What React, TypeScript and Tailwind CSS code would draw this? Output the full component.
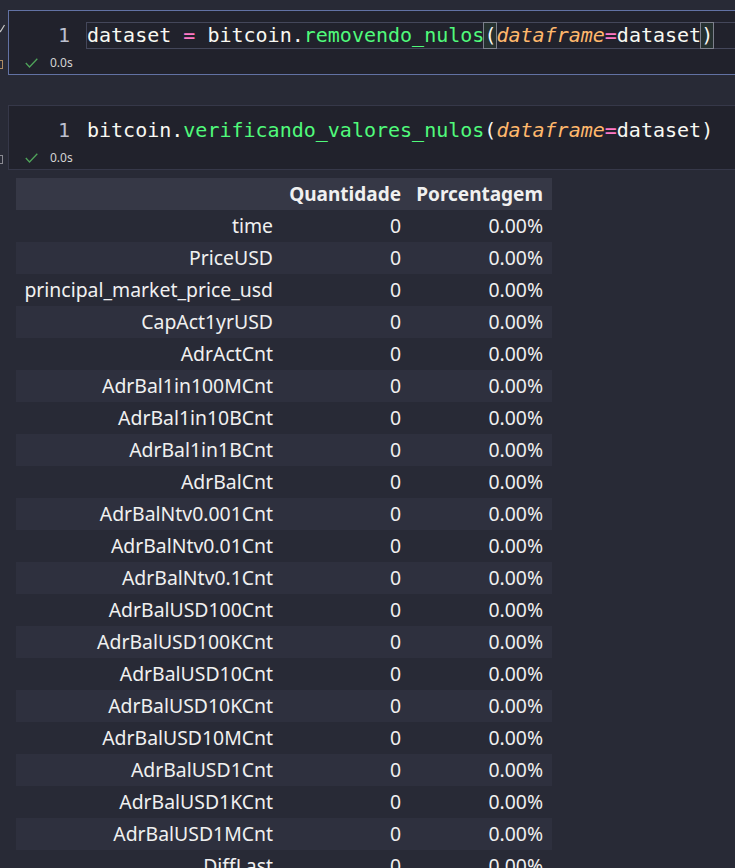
import React from "react";

type Tok = { t: string; c: string; i?: boolean; box?: boolean };

const cell1: Tok[] = [
  { t: "dataset ", c: "text-[#f8f8f2]" },
  { t: "=", c: "text-[#ff79c6]" },
  { t: " bitcoin.", c: "text-[#f8f8f2]" },
  { t: "removendo_nulos", c: "text-[#50fa7b]" },
  { t: "(", c: "text-[#f8f8f2]", box: true },
  { t: "dataframe", c: "text-[#ffb86c]", i: true },
  { t: "=", c: "text-[#ff79c6]" },
  { t: "dataset", c: "text-[#f8f8f2]" },
  { t: ")", c: "text-[#f8f8f2]", box: true },
];

const cell2: Tok[] = [
  { t: "bitcoin.", c: "text-[#f8f8f2]" },
  { t: "verificando_valores_nulos", c: "text-[#50fa7b]" },
  { t: "(", c: "text-[#f8f8f2]" },
  { t: "dataframe", c: "text-[#ffb86c]", i: true },
  { t: "=", c: "text-[#ff79c6]" },
  { t: "dataset", c: "text-[#f8f8f2]" },
  { t: ")", c: "text-[#f8f8f2]" },
];

const rows = [
  "time",
  "PriceUSD",
  "principal_market_price_usd",
  "CapAct1yrUSD",
  "AdrActCnt",
  "AdrBal1in100MCnt",
  "AdrBal1in10BCnt",
  "AdrBal1in1BCnt",
  "AdrBalCnt",
  "AdrBalNtv0.001Cnt",
  "AdrBalNtv0.01Cnt",
  "AdrBalNtv0.1Cnt",
  "AdrBalUSD100Cnt",
  "AdrBalUSD100KCnt",
  "AdrBalUSD10Cnt",
  "AdrBalUSD10KCnt",
  "AdrBalUSD10MCnt",
  "AdrBalUSD1Cnt",
  "AdrBalUSD1KCnt",
  "AdrBalUSD1MCnt",
  "DiffLast",
];

function Check() {
  return (
    <svg width="13" height="10" viewBox="0 0 13 10" className="block">
      <polyline points="0.8,5 4.5,9 12.3,0.7" fill="none" stroke="#4fa35a" strokeWidth="1.3" />
    </svg>
  );
}

function Cell({
  toks,
  active,
  square,
}: {
  toks: Tok[];
  active: boolean;
  square: string;
}) {
  return (
    <div className="relative">
      <div
        className={`absolute left-0 top-[50px] h-[9px] w-[3px] border border-l-0 ${square}`}
      />
      {active && (
        <svg width="6" height="10" viewBox="0 0 6 10" className="absolute left-0 top-[13px]">
          <polyline points="-2,6 0.5,8.5 4.5,2" fill="none" stroke="#c8c8c8" strokeWidth="1.2" />
        </svg>
      )}
      <div
        className={`ml-[8px] h-[65px] border border-r-0 bg-[#21222c] pt-[11px] pb-[1px] ${
          active ? "border-[#6272a4]" : "border-[#363849]"
        }`}
      >
        <div className="flex h-[27px]">
          <div className="w-[62px] shrink-0 pr-px text-right font-['DejaVu_Sans_Mono',monospace] text-[20px] leading-[27px] text-[#bcc0cf]">
            1
          </div>
          <div
            className={`ml-[15px] h-[27px] flex-1 whitespace-pre border border-r-0 font-['DejaVu_Sans_Mono',monospace] text-[20px] leading-[25px] ${
              active ? "border-[#44475a]" : "border-transparent"
            }`}
          >
            {toks.map((tk, k) =>
              tk.box && active ? (
                <span
                  key={k}
                  className={`inline-block h-[25px] align-top outline outline-1 outline-[#7c808c] bg-[#263130] ${tk.c}`}
                >
                  {tk.t}
                </span>
              ) : (
                <span key={k} className={`${tk.c} ${tk.i ? "italic" : ""}`}>
                  {tk.t}
                </span>
              )
            )}
          </div>
        </div>
        <div className="mt-[4px] flex h-[20px] items-center pl-[16px]">
          <Check />
          <span className="ml-[12px] font-['Noto_Sans',sans-serif] text-[12px] leading-[20px] text-[#d4d4d4]">
            0.0s
          </span>
        </div>
      </div>
    </div>
  );
}

export default function App() {
  return (
    <div className="h-[868px] w-full overflow-hidden bg-[#282a36] pt-[10px]">
      <Cell toks={cell1} active={true} square="border-[#b08c62]" />
      <div className="h-[30px]" />
      <Cell toks={cell2} active={false} square="border-[#8a8a92]" />
      <div className="ml-[16px] mt-[8px] w-[536px] font-['Noto_Sans',sans-serif] text-[#f0f0f0]">
        <div className="grid h-[32px] grid-cols-[265px_128px_143px] bg-[#363846] text-[19px] font-bold leading-[32px]">
          <div className="pr-[8px] text-right" />
          <div className="pr-[8px] text-right whitespace-nowrap">Quantidade</div>
          <div className="pr-[9px] text-right whitespace-nowrap">Porcentagem</div>
        </div>
        {rows.map((r, i) => (
          <div
            key={r}
            className={`grid h-[32px] grid-cols-[265px_128px_143px] text-[19.4px] leading-[32px] ${
              i % 2 === 1 ? "bg-[#2e303e]" : ""
            }`}
          >
            <div className="pr-[8px] text-right whitespace-nowrap">{r}</div>
            <div className="pr-[8px] text-right">0</div>
            <div className="pr-[9px] text-right">0.00%</div>
          </div>
        ))}
      </div>
    </div>
  );
}
